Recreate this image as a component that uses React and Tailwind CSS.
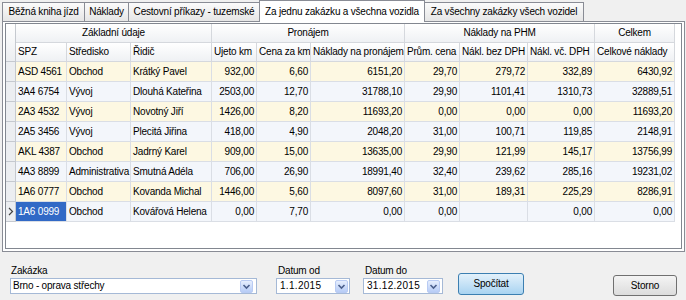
import React from "react";

const rows = [
  ["ASD 4561", "Obchod", "Krátký Pavel", "932,00", "6,60", "6151,20", "29,70", "279,72", "332,89", "6430,92"],
  ["3A4 6754", "Vývoj", "Dlouhá Kateřina", "2503,00", "12,70", "31788,10", "29,90", "1101,41", "1310,73", "32889,51"],
  ["2A3 4532", "Vývoj", "Novotný Jiří", "1426,00", "8,20", "11693,20", "0,00", "0,00", "0,00", "11693,20"],
  ["2A5 3456", "Vývoj", "Plecitá Jiřina", "418,00", "4,90", "2048,20", "31,00", "100,71", "119,85", "2148,91"],
  ["AKL 4387", "Obchod", "Jadrný Karel", "909,00", "15,00", "13635,00", "29,90", "121,99", "145,17", "13756,99"],
  ["4A3 8899", "Administrativa", "Smutná Adéla", "706,00", "26,90", "18991,40", "32,40", "239,62", "285,16", "19231,02"],
  ["1A6 0777", "Obchod", "Kovanda Michal", "1446,00", "5,60", "8097,60", "31,00", "189,31", "225,29", "8286,91"],
  ["1A6 0999", "Obchod", "Kovářová Helena", "0,00", "7,70", "0,00", "0,00", "", "0,00", "0,00"],
];

const cols = [
  { w: "w-[51px]", num: false, label: "SPZ" },
  { w: "w-[64px]", num: false, label: "Středisko" },
  { w: "w-[81px]", num: false, label: "Řidič" },
  { w: "w-[45px]", num: true, label: "Ujeto km" },
  { w: "w-[54px]", num: true, label: "Cena za km" },
  { w: "w-[94px]", num: true, label: "Náklady na pronájem" },
  { w: "w-[55px]", num: true, label: "Prům. cena" },
  { w: "w-[68px]", num: true, label: "Nákl. bez DPH" },
  { w: "w-[67px]", num: true, label: "Nákl. vč. DPH" },
  { w: "w-[80px]", num: true, label: "Celkové náklady" },
];

const groups = [
  { w: "w-[196px]", label: "Základní údaje" },
  { w: "w-[193px]", label: "Pronájem" },
  { w: "w-[190px]", label: "Náklady na PHM" },
  { w: "w-[80px]", label: "Celkem" },
];

const hdr = "shrink-0 h-full flex items-center whitespace-nowrap overflow-hidden border-r border-b border-[#d5d8dd] bg-linear-to-b from-white to-[#eff1f4]";

function DropBtn() {
  return (
    <div className="w-[13px] h-[13px] shrink-0 rounded-[2px] border border-[#b9cbf3] bg-linear-to-b from-[#e6eefd] to-[#b7ccf6] flex items-center justify-center">
      <svg width="9" height="9" viewBox="0 0 9 9">
        <path d="M1.5 3 L4.5 6 L7.5 3" fill="none" stroke="#4b5f8c" strokeWidth="1.6" />
      </svg>
    </div>
  );
}

function Tab({ w, children, active }) {
  if (active) {
    return (
      <div className={`${w} h-[22px] -mb-px z-10 -mr-px bg-white border border-b-0 border-[#898c95] flex items-center justify-center whitespace-nowrap`}>
        {children}
      </div>
    );
  }
  return (
    <div className={`${w} h-[19px] -mr-px bg-linear-to-b from-[#fbfbfb] to-[#e6e6e6] border border-b-0 border-[#898c95] flex items-center justify-center whitespace-nowrap`}>
      {children}
    </div>
  );
}

export default function App() {
  return (
    <div className="w-[686px] h-[300px] overflow-hidden bg-[#f0f0f0] text-black text-[10px] leading-[12px] tracking-[-0.2px] font-['Liberation_Sans',Arial,sans-serif]">
      {/* tabs */}
      <div className="flex items-end h-[21px] pl-[2px]">
        <Tab w="w-[83px]">Běžná kniha jízd</Tab>
        <Tab w="w-[45px]">Náklady</Tab>
        <Tab w="w-[132px]">Cestovní příkazy - tuzemské</Tab>
        <Tab w="w-[166px]" active>Za jednu zakázku a všechna vozidla</Tab>
        <Tab w="w-[160px]">Za všechny zakázky všech vozidel</Tab>
      </div>

      {/* tab page */}
      <div className="relative ml-[2px] w-[683px] h-[231px] bg-white border border-[#898c95] pt-[1px] px-[2px] pb-[2px]">
        <div className="h-full border border-[#828790] bg-white flex flex-col">
          {/* header */}
          <div className="flex h-[38px] shrink-0">
            <div className="w-[10px] shrink-0 h-full border-r border-b border-[#c5c9cf] bg-linear-to-b from-white to-[#eceef1]" />
            <div className="flex flex-col">
              <div className="flex h-[19px]">
                {groups.map((g) => (
                  <div key={g.label} className={`${g.w} ${hdr} justify-center`}>{g.label}</div>
                ))}
              </div>
              <div className="flex h-[19px]">
                {cols.map((c) => (
                  <div key={c.label} className={`${c.w} ${hdr} pl-[2px]`}>{c.label}</div>
                ))}
              </div>
            </div>
          </div>

          {/* rows */}
          {rows.map((r, i) => {
            const bg = i % 2 === 0 ? "bg-[#fdf8e2]" : "bg-[#f3f6fb]";
            const last = i === rows.length - 1;
            return (
              <div key={i} className="flex h-[20px] shrink-0">
                <div className="w-[10px] shrink-0 h-full border-r border-b border-[#c5c9cf] bg-[#eceef1] flex items-center justify-center">
                  {last && (
                    <svg width="6" height="9" viewBox="0 0 6 9">
                      <path d="M1 1 L4.5 4.5 L1 8" fill="none" stroke="#444" strokeWidth="1.2" />
                    </svg>
                  )}
                </div>
                {cols.map((c, j) => {
                  const sel = last && j === 0;
                  return (
                    <div
                      key={j}
                      className={`${c.w} shrink-0 h-full flex items-center whitespace-nowrap overflow-hidden border-r border-b border-[#dadee5] ${
                        c.num ? "justify-end pr-[2px]" : "pl-[2px]"
                      } ${sel ? "bg-[#3169c6] text-white" : bg}`}
                    >
                      {r[j]}
                    </div>
                  );
                })}
              </div>
            );
          })}
        </div>
      </div>

      {/* bottom form */}
      <div className="flex items-start pt-[13px]">
        <div className="ml-[10px] w-[247px] flex flex-col">
          <span className="h-[13px] pl-[1px]">Zakázka</span>
          <div className="h-[16px] bg-white border border-[#a5b9d6] flex items-center pl-[2px] pr-[3px]">
            <span className="flex-1">Brno - oprava střechy</span>
            <DropBtn />
          </div>
        </div>
        <div className="ml-[19px] w-[74px] flex flex-col">
          <span className="h-[13px] pl-[2px]">Datum od</span>
          <div className="h-[16px] bg-white border border-[#a5b9d6] flex items-center pl-[3px] pr-[1px]">
            <span className="flex-1 tracking-[0.3px]">1.1.2015</span>
            <DropBtn />
          </div>
        </div>
        <div className="ml-[13px] w-[80px] flex flex-col">
          <span className="h-[13px] pl-[2px]">Datum do</span>
          <div className="h-[16px] bg-white border border-[#a5b9d6] flex items-center pl-[3px] pr-[2px]">
            <span className="flex-1 tracking-[0.3px]">31.12.2015</span>
            <DropBtn />
          </div>
        </div>
        <button className="ml-[15px] mt-[8px] w-[66px] h-[22px] rounded-[3px] border border-[#3c7fb1] bg-linear-to-b from-[#e3f1fb] to-[#a9d3f1] text-black">
          Spočítat
        </button>
        <button className="ml-[89px] mt-[10px] w-[64px] h-[21px] rounded-[3px] border border-[#707070] bg-linear-to-b from-[#f4f4f4] to-[#dcdcdc] text-black">
          Storno
        </button>
      </div>
    </div>
  );
}
